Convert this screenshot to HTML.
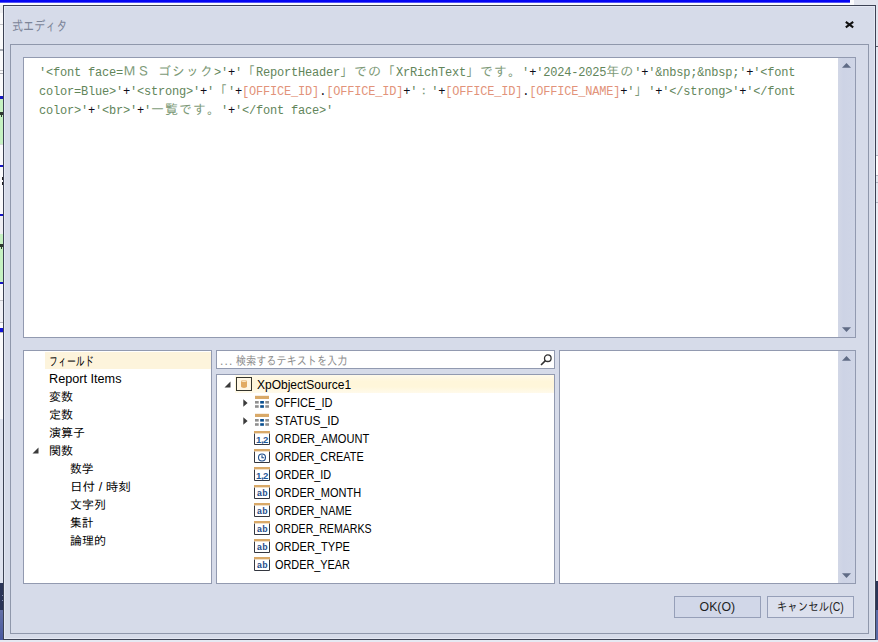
<!DOCTYPE html>
<html lang="ja">
<head>
<meta charset="utf-8">
<title>式エディタ</title>
<style>
*{box-sizing:border-box;margin:0;padding:0}
html,body{width:878px;height:642px;overflow:hidden;background:#f3f3f3}
body{position:relative;font-family:"Liberation Sans","IPAGothic",sans-serif;font-size:12px;color:#1e1e1e}
.abs{position:absolute}
/* background app bits peeking around the dialog */
.bg{position:absolute}
/* dialog */
#dlg{position:absolute;left:3px;top:5px;width:873px;height:635px;background:#d6dbe9;border:1px solid #3c4254}
#dlg:before{content:"";position:absolute;left:0;top:0;right:0;bottom:0;border:1px solid #e4e8f3}
#title{position:absolute;left:8px;top:11px;font-size:14px;line-height:18px;color:#7c8498;font-family:"Liberation Sans","IPAGothic",sans-serif;white-space:nowrap}
#close{position:absolute;left:840px;top:14px;width:11px;height:11px}
#frame{position:absolute;left:10px;top:44px;width:859px;height:590px;border:1px solid #8f97ab;background:#d6dbe9}
.box{position:absolute;background:#fff;border:1px solid #929ab0}
.sb{position:absolute;top:0;right:0;bottom:0;width:17px;background:linear-gradient(90deg,#d2d7e6,#cdd3e5 30%,#cfd5e6)}
.arr{position:absolute;left:4px;width:0;height:0;border-left:4.5px solid transparent;border-right:4.5px solid transparent}
.arr.up{border-bottom:5px solid #5f6b85}
.arr.dn{border-top:5px solid #5f6b85}
/* editor text */
#code{position:absolute;left:0;top:0;font-family:"Liberation Mono","IPAGothic",monospace;font-size:12px;letter-spacing:-0.2px;color:#62855a;white-space:nowrap}
#code .ln{position:absolute;left:15px;height:19px;line-height:19px;white-space:nowrap}
#code .j{font-family:"IPAGothic","Liberation Mono",monospace;font-size:13px;letter-spacing:1px;color:#7d9a78}
#code .o{color:#0c0c18}
#code .f{color:#e2937a}
/* lists */
.row{position:absolute;height:18px;line-height:18px;white-space:nowrap;font-size:12px;color:#000}
.jp{font-family:"Liberation Sans","IPAGothic",sans-serif;font-size:12px}
.t{display:inline-block;transform-origin:0 50%;white-space:nowrap}
.t.c{transform-origin:50% 50%}
.hl{position:absolute;background:#fdf4dc}
.btn{position:absolute;top:596px;height:22px;width:87px;border:1px solid #969fb8;background:#dce0ed;text-align:center;line-height:20px;font-size:12px;color:#1e1e1e;white-space:nowrap}
.ico{position:absolute;width:16px;height:15px}
</style>
</head>
<body>
<!-- background strips -->
<div class="bg" style="left:0;top:0;width:850px;height:2px;background:#0505f2"></div>
<div class="bg" style="left:0;top:2px;width:850px;height:1px;background:#5252f4"></div>
<div class="bg" style="left:0;top:3px;width:854px;height:2px;background:#fbfbfd"></div>
<div class="bg" style="left:850px;top:0;width:4px;height:5px;background:#fbfbfd"></div>
<div class="bg" style="left:854px;top:0;width:24px;height:5px;background:#e1e4ee"></div>
<div class="bg" style="left:0;top:5px;width:3px;height:414px;background:#fafafb"></div>
<div class="bg" style="left:0;top:5px;width:3px;height:8px;background:#ededf0"></div>
<div class="bg" style="left:0;top:24px;width:3px;height:1px;background:#c4c4c8"></div>
<div class="bg" style="left:0;top:49px;width:3px;height:2px;background:#a8acb4"></div>
<div class="bg" style="left:0;top:70px;width:3px;height:1px;background:#c4c4c8"></div>
<div class="bg" style="left:0;top:73px;width:3px;height:1px;background:#b0b0b6"></div>
<div class="bg" style="left:0;top:96px;width:3px;height:3px;background:#1515c4"></div>
<div class="bg" style="left:0;top:99px;width:3px;height:45px;background:#c6f2c2"></div>
<div class="bg" style="left:0;top:112px;width:3px;height:3px;background:#2e3a2e"></div>
<div class="bg" style="left:1px;top:115px;width:1px;height:2px;background:#2e3a2e"></div>
<div class="bg" style="left:0;top:144px;width:3px;height:1px;background:#d8dcd8"></div>
<div class="bg" style="left:0;top:165px;width:3px;height:2px;background:#1515c4"></div>
<div class="bg" style="left:2px;top:177px;width:1px;height:3px;background:#222"></div>
<div class="bg" style="left:2px;top:182px;width:1px;height:3px;background:#222"></div>
<div class="bg" style="left:0;top:214px;width:3px;height:2px;background:#1515c4"></div>
<div class="bg" style="left:0;top:216px;width:3px;height:18px;background:#efeff3"></div>
<div class="bg" style="left:0;top:234px;width:3px;height:48px;background:#c6f2c2"></div>
<div class="bg" style="left:0;top:244px;width:3px;height:3px;background:#2e3a2e"></div>
<div class="bg" style="left:1px;top:247px;width:1px;height:2px;background:#2e3a2e"></div>
<div class="bg" style="left:0;top:282px;width:3px;height:2px;background:#1515c4"></div>
<div class="bg" style="left:0;top:300px;width:3px;height:1px;background:#c4c4c8"></div>
<div class="bg" style="left:0;top:301px;width:3px;height:21px;background:#f1f1f5"></div>
<div class="bg" style="left:0;top:322px;width:3px;height:1px;background:#b8b8be"></div>
<div class="bg" style="left:0;top:328px;width:3px;height:4px;background:#1212d8"></div>
<div class="bg" style="left:0;top:332px;width:3px;height:1px;background:#b8b8be"></div>
<div class="bg" style="left:0;top:419px;width:3px;height:164px;background:#dfe3ef"></div>
<div class="bg" style="left:0;top:583px;width:3px;height:27px;background:#2b3558"></div>
<div class="bg" style="left:2px;top:595px;width:1px;height:1px;background:#8a93b8"></div>
<div class="bg" style="left:2px;top:600px;width:1px;height:1px;background:#8a93b8"></div>
<div class="bg" style="left:0;top:610px;width:3px;height:30px;background:linear-gradient(#6470a8,#4858a0)"></div>
<div class="bg" style="left:0;top:640px;width:878px;height:2px;background:#e6e9f3"></div>
<div class="bg" style="left:876px;top:5px;width:2px;height:41px;background:#e3e6ef"></div>
<div class="bg" style="left:876px;top:46px;width:2px;height:1px;background:#555a66"></div>
<div class="bg" style="left:876px;top:47px;width:2px;height:534px;background:#e6e9f2"></div>
<div class="bg" style="left:876px;top:155px;width:2px;height:20px;background:#fdfdfe"></div>
<div class="bg" style="left:876px;top:155px;width:2px;height:1px;background:#b4b8c4"></div>
<div class="bg" style="left:876px;top:175px;width:2px;height:1px;background:#b4b8c4"></div>
<div class="bg" style="left:876px;top:182px;width:2px;height:1px;background:#b4b8c4"></div>
<div class="bg" style="left:876px;top:202px;width:2px;height:1px;background:#b4b8c4"></div>
<div class="bg" style="left:876px;top:203px;width:2px;height:378px;background:#eceef5"></div>
<div class="bg" style="left:876px;top:581px;width:2px;height:29px;background:#2b3558"></div>
<div class="bg" style="left:876px;top:610px;width:2px;height:30px;background:#5a69a6"></div>

<div id="dlg">
  <div id="title"><span class="t" style="transform:scaleX(0.793)">式エディタ</span></div>
  <svg id="close" viewBox="0 0 11 11"><path d="M1.8 1.9 L9.2 7.3 M9.2 1.9 L1.8 7.3" stroke="#111" stroke-width="2.1" fill="none"/></svg>
</div>
<div id="frame"></div>

<!-- editor -->
<div class="box" style="left:23px;top:57px;width:833px;height:281px">
  <div id="code">
    <div class="ln" style="top:4px">'&lt;font face=<span class="j">ＭＳ</span> <span class="j">ゴシック</span>&gt;'<span class="o">+</span>'<span class="j">「</span>ReportHeader<span class="j">」での「</span>XrRichText<span class="j">」です。</span>'<span class="o">+</span>'2024-2025<span class="j">年の</span>'<span class="o">+</span>'&amp;nbsp;&amp;nbsp;'<span class="o">+</span>'&lt;font</div>
    <div class="ln" style="top:23px">color=Blue&gt;'<span class="o">+</span>'&lt;strong&gt;'<span class="o">+</span>'<span class="j">「</span>'<span class="o">+</span><span class="f">[OFFICE_ID]</span><span class="o">.</span><span class="f">[OFFICE_ID]</span><span class="o">+</span>'<span class="j">：</span>'<span class="o">+</span><span class="f">[OFFICE_ID]</span><span class="o">.</span><span class="f">[OFFICE_NAME]</span><span class="o">+</span>'<span class="j">」</span>'<span class="o">+</span>'&lt;/strong&gt;'<span class="o">+</span>'&lt;/font</div>
    <div class="ln" style="top:42px">color&gt;'<span class="o">+</span>'&lt;br&gt;'<span class="o">+</span>'<span class="j">一覧です。</span>'<span class="o">+</span>'&lt;/font face&gt;'</div>
  </div>
  <div class="sb"><svg class="abs" style="left:4px;top:5.4px" width="9" height="5" viewBox="0 0 9 5"><path d="M0 4.7 L4.5 0 L9 4.7 Z" fill="#5f6b85"/></svg><svg class="abs" style="left:4px;bottom:5.2px" width="9" height="5" viewBox="0 0 9 5"><path d="M0 0.3 L4.5 5 L9 0.3 Z" fill="#5f6b85"/></svg></div>
</div>

<!-- left category list -->
<div class="box" style="left:23px;top:350px;width:189px;height:234px">
  <div class="hl" style="left:21px;top:1px;width:166px;height:17px"></div>
  <div class="row jp" style="left:25px;top:2px;font-size:13px"><span class="t" style="transform:scaleX(0.688)">フィールド</span></div>
  <div class="row" style="left:25px;top:19px"><span class="t" style="transform:scaleX(1.055)">Report Items</span></div>
  <div class="row jp" style="left:25px;top:37px"><span class="t">変数</span></div>
  <div class="row jp" style="left:25px;top:55px"><span class="t">定数</span></div>
  <div class="row jp" style="left:25px;top:73px"><span class="t">演算子</span></div>
  <svg class="abs" style="left:8px;top:96px" width="7" height="7" viewBox="0 0 7 7"><path d="M6.5 0.5 L6.5 6.5 L0.5 6.5 Z" fill="#3b3b3b"/></svg>
  <div class="row jp" style="left:25px;top:91px"><span class="t">関数</span></div>
  <div class="row jp" style="left:46px;top:109px"><span class="t" style="transform:scaleX(0.979)">数学</span></div>
  <div class="row jp" style="left:46px;top:127px"><span class="t" style="transform:scaleX(1.051)">日付 / 時刻</span></div>
  <div class="row jp" style="left:46px;top:145px"><span class="t">文字列</span></div>
  <div class="row jp" style="left:46px;top:163px"><span class="t" style="transform:scaleX(0.979)">集計</span></div>
  <div class="row jp" style="left:46px;top:181px"><span class="t">論理的</span></div>
</div>

<!-- search box -->
<div class="box" style="left:216px;top:350px;width:339px;height:19px">
  <div class="row" style="left:3px;top:1px;height:17px;line-height:18px;color:#8c8c8c;letter-spacing:1.2px">...</div>
  <div class="row jp" style="left:19px;top:1px;height:17px;line-height:18px;color:#8c8c8c"><span class="t" style="transform:scaleX(0.843)">検索するテキストを入力</span></div>
  <svg class="abs" style="left:322px;top:2px" width="14" height="14" viewBox="0 0 14 14"><circle cx="8.8" cy="5.2" r="3.3" fill="none" stroke="#333" stroke-width="1.3"/><path d="M6.4 7.6 L2 12" stroke="#333" stroke-width="1.6"/></svg>
</div>

<!-- field tree -->
<div class="box" style="left:216px;top:374px;width:339px;height:210px" id="tree">
  <div class="hl" style="left:18px;top:0;width:319px;height:18px;background:linear-gradient(#fffaeb,#fff6da 35%,#fff6da 65%,#fffaeb)"></div>
  <svg class="abs" style="left:7px;top:6px" width="7" height="7" viewBox="0 0 7 7"><path d="M6.5 0.5 L6.5 6.5 L0.5 6.5 Z" fill="#3b3b3b"/></svg>
  <svg class="ico" style="left:19px;top:2px" viewBox="0 0 16 15"><rect x="0.5" y="0.5" width="15" height="13" fill="#fff7e4" stroke="#34342c"/><path d="M5 4.2 C5 2.8,11 2.8,11 4.2 L11 9.6 C11 11.4,5 11.4,5 9.6 Z" fill="#e2ab62"/><ellipse cx="8" cy="4.2" rx="2.6" ry="0.8" fill="#fbe9c6"/></svg>
  <div class="row" style="left:40px;top:1px"><span class="t">XpObjectSource1</span></div>
  <svg class="abs" style="left:26px;top:24px" width="5" height="8" viewBox="0 0 5 8"><path d="M0.3 0.3 L4.6 4 L0.3 7.7 Z" fill="#3b3b3b"/></svg>
  <svg class="ico" style="left:37px;top:20px" viewBox="0 0 16 15"><rect x="1" y="0.8" width="14" height="3.2" fill="#d9a968"/><rect x="1" y="6" width="3.7" height="2.6" fill="#8f8f8f"/><rect x="6.2" y="6" width="3.7" height="2.6" fill="#0b4f8f"/><rect x="11.3" y="6" width="3.7" height="2.6" fill="#8f8f8f"/><rect x="1" y="10.2" width="3.7" height="2.6" fill="#8f8f8f"/><rect x="6.2" y="10.2" width="3.7" height="2.6" fill="#0b4f8f"/><rect x="11.3" y="10.2" width="3.7" height="2.6" fill="#8f8f8f"/></svg>
  <div class="row" style="left:58px;top:19px"><span class="t" style="transform:scaleX(0.916)">OFFICE_ID</span></div>
  <svg class="abs" style="left:26px;top:42px" width="5" height="8" viewBox="0 0 5 8"><path d="M0.3 0.3 L4.6 4 L0.3 7.7 Z" fill="#3b3b3b"/></svg>
  <svg class="ico" style="left:37px;top:38px" viewBox="0 0 16 15"><rect x="1" y="0.8" width="14" height="3.2" fill="#d9a968"/><rect x="1" y="6" width="3.7" height="2.6" fill="#8f8f8f"/><rect x="6.2" y="6" width="3.7" height="2.6" fill="#0b4f8f"/><rect x="11.3" y="6" width="3.7" height="2.6" fill="#8f8f8f"/><rect x="1" y="10.2" width="3.7" height="2.6" fill="#8f8f8f"/><rect x="6.2" y="10.2" width="3.7" height="2.6" fill="#0b4f8f"/><rect x="11.3" y="10.2" width="3.7" height="2.6" fill="#8f8f8f"/></svg>
  <div class="row" style="left:58px;top:37px"><span class="t">STATUS_ID</span></div>
  <svg class="ico" style="left:37px;top:56px" viewBox="0 0 16 15"><rect x="0" y="0" width="16" height="2.6" fill="#d9a968"/><path d="M0.5 2.6 V13.5 H15.5 V2.6" fill="#fff" stroke="#33363f"/><text x="8" y="11.8" text-anchor="middle" font-family="Liberation Sans,sans-serif" font-weight="bold" font-size="9.6" fill="#1f5a99" letter-spacing="-0.5">1,2</text></svg>
  <div class="row" style="left:58px;top:55px"><span class="t" style="transform:scaleX(0.924)">ORDER_AMOUNT</span></div>
  <svg class="ico" style="left:37px;top:74px" viewBox="0 0 16 15"><rect x="0" y="0" width="16" height="2.6" fill="#d9a968"/><path d="M0.5 2.6 V13.5 H15.5 V2.6" fill="#fff" stroke="#33363f"/><circle cx="8" cy="8.5" r="3.5" fill="none" stroke="#1f4e8c" stroke-width="1.1"/><path d="M8 6.3 V8.7 H10.2" fill="none" stroke="#1f4e8c" stroke-width="1.1"/></svg>
  <div class="row" style="left:58px;top:73px"><span class="t" style="transform:scaleX(0.907)">ORDER_CREATE</span></div>
  <svg class="ico" style="left:37px;top:92px" viewBox="0 0 16 15"><rect x="0" y="0" width="16" height="2.6" fill="#d9a968"/><path d="M0.5 2.6 V13.5 H15.5 V2.6" fill="#fff" stroke="#33363f"/><text x="8" y="11.8" text-anchor="middle" font-family="Liberation Sans,sans-serif" font-weight="bold" font-size="9.6" fill="#1f5a99" letter-spacing="-0.5">1,2</text></svg>
  <div class="row" style="left:58px;top:91px"><span class="t" style="transform:scaleX(0.905)">ORDER_ID</span></div>
  <svg class="ico" style="left:37px;top:110px" viewBox="0 0 16 15"><rect x="0" y="0" width="16" height="2.6" fill="#d9a968"/><path d="M0.5 2.6 V13.5 H15.5 V2.6" fill="#fff" stroke="#33363f"/><text x="8.2" y="11.4" text-anchor="middle" font-family="Liberation Mono,monospace" font-weight="bold" font-size="9" fill="#1f4e8c">ab</text></svg>
  <div class="row" style="left:58px;top:109px"><span class="t" style="transform:scaleX(0.917)">ORDER_MONTH</span></div>
  <svg class="ico" style="left:37px;top:128px" viewBox="0 0 16 15"><rect x="0" y="0" width="16" height="2.6" fill="#d9a968"/><path d="M0.5 2.6 V13.5 H15.5 V2.6" fill="#fff" stroke="#33363f"/><text x="8.2" y="11.4" text-anchor="middle" font-family="Liberation Mono,monospace" font-weight="bold" font-size="9" fill="#1f4e8c">ab</text></svg>
  <div class="row" style="left:58px;top:127px"><span class="t" style="transform:scaleX(0.906)">ORDER_NAME</span></div>
  <svg class="ico" style="left:37px;top:146px" viewBox="0 0 16 15"><rect x="0" y="0" width="16" height="2.6" fill="#d9a968"/><path d="M0.5 2.6 V13.5 H15.5 V2.6" fill="#fff" stroke="#33363f"/><text x="8.2" y="11.4" text-anchor="middle" font-family="Liberation Mono,monospace" font-weight="bold" font-size="9" fill="#1f4e8c">ab</text></svg>
  <div class="row" style="left:58px;top:145px"><span class="t" style="transform:scaleX(0.884)">ORDER_REMARKS</span></div>
  <svg class="ico" style="left:37px;top:164px" viewBox="0 0 16 15"><rect x="0" y="0" width="16" height="2.6" fill="#d9a968"/><path d="M0.5 2.6 V13.5 H15.5 V2.6" fill="#fff" stroke="#33363f"/><text x="8.2" y="11.4" text-anchor="middle" font-family="Liberation Mono,monospace" font-weight="bold" font-size="9" fill="#1f4e8c">ab</text></svg>
  <div class="row" style="left:58px;top:163px"><span class="t" style="transform:scaleX(0.921)">ORDER_TYPE</span></div>
  <svg class="ico" style="left:37px;top:182px" viewBox="0 0 16 15"><rect x="0" y="0" width="16" height="2.6" fill="#d9a968"/><path d="M0.5 2.6 V13.5 H15.5 V2.6" fill="#fff" stroke="#33363f"/><text x="8.2" y="11.4" text-anchor="middle" font-family="Liberation Mono,monospace" font-weight="bold" font-size="9" fill="#1f4e8c">ab</text></svg>
  <div class="row" style="left:58px;top:181px"><span class="t" style="transform:scaleX(0.906)">ORDER_YEAR</span></div>
</div>

<!-- description panel -->
<div class="box" style="left:559px;top:350px;width:297px;height:234px">
  <div class="sb"><svg class="abs" style="left:4px;top:5.4px" width="9" height="5" viewBox="0 0 9 5"><path d="M0 4.7 L4.5 0 L9 4.7 Z" fill="#5f6b85"/></svg><svg class="abs" style="left:4px;bottom:5.2px" width="9" height="5" viewBox="0 0 9 5"><path d="M0 0.3 L4.5 5 L9 0.3 Z" fill="#5f6b85"/></svg></div>
</div>

<div class="btn" style="left:674px;background:#d1d7e8"><span class="t c" style="transform:scaleX(1.024)">OK(O)</span></div>
<div class="btn jp" style="left:767px"><span class="t c" style="transform:scaleX(0.874)">キャンセル(C)</span></div>
</body>
</html>
